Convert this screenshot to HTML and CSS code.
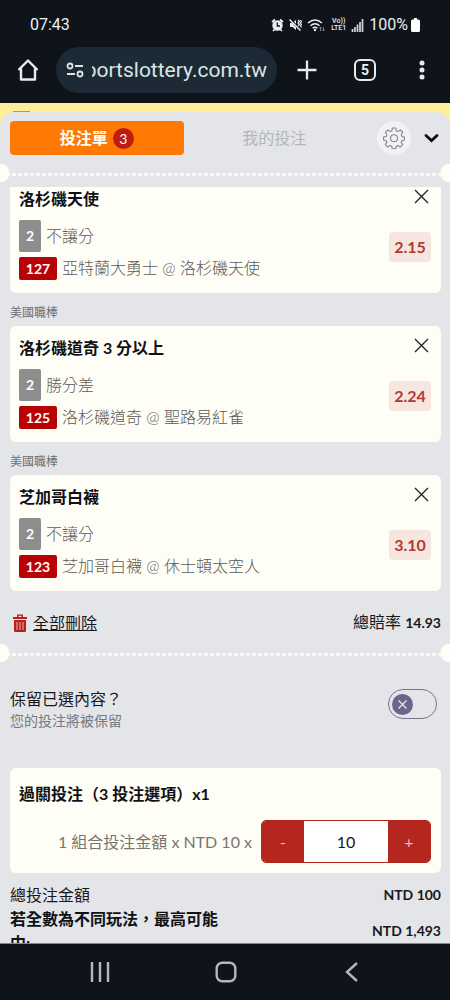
FILE: index.html
```html
<!DOCTYPE html>
<html lang="zh-Hant">
<head>
<meta charset="utf-8">
<meta name="viewport" content="width=device-width, initial-scale=1">
<title>投注單</title>
<link rel="stylesheet" href="styles.css">
</head>
<body>
<div class="phone">
  <header class="chrome">
    <div class="status">
      <time class="clock">07:43</time>
      <div class="status-icons">
        <svg width="13" height="14" viewBox="0 0 13 14"><circle cx="6.5" cy="7.5" r="4.2" fill="#eceff1" stroke="#eceff1" stroke-width="2"/><path d="M1 4 4 1.5M12 4 9 1.5M2 13l2-2M11 13 9 11" stroke="#eceff1" stroke-width="1.7"/><path d="M6.3 4.500v3.500h2.700" fill="none" stroke="#10141b" stroke-width="1.3"/></svg>
        <svg width="13" height="14" viewBox="0 0 13 14"><path d="M1 5h2.500L7 2v10L3.500 9H1z" fill="#eceff1"/><path d="M1 1l11 12" stroke="#10141b" stroke-width="2.400"/><path d="M.5 1.500l11 11" stroke="#eceff1" stroke-width="1.400"/><path d="M9 2l1.500 1.500L9 5l1.500 1.500L9 8M11.500 2l1 1.500-1 1.500 1 1.500-1 1.500 1 1.500" fill="none" stroke="#eceff1" stroke-width="1.200"/></svg>
        <svg width="19" height="14" viewBox="0 0 19 14"><path d="M1 5q7-6 14 0M3.500 7.800q4.500-4 9 0M5.700 10.200q2.300-2 4.600 0" fill="none" stroke="#eceff1" stroke-width="1.500"/><circle cx="8" cy="12" r="1.200" fill="#eceff1"/><path d="M13.500 13V9m-1.200 1.300L13.500 9l1.200 1.300M16.500 9v4m-1.200-1.300L16.500 13l1.200-1.300" fill="none" stroke="#7d8287" stroke-width="1"/></svg>
        <span class="volte"><span>Vo))</span><span>LTE1</span></span>
        <svg width="13" height="13" viewBox="0 0 13 13"><path d="M1.500 13v-3M4 13V8M6.500 13V5.500M9 13V3M11.500 13V0" stroke="#d5d8da" stroke-width="1.700"/></svg>
        <span class="battery-text">100%</span>
        <svg width="9" height="14" viewBox="0 0 9 14"><path d="M3 0h3v1.500h1.500Q9 1.500 9 3v9.500q0 1.500-1.500 1.500h-6Q0 14 0 12.500V3q0-1.500 1.500-1.500H3z" fill="#fff"/></svg>
      </div>
    </div>
    <div class="toolbar">
      <button class="icon-btn" type="button" aria-label="首頁"><svg width="22" height="22" viewBox="0 0 22 22"><path d="M1.500 11 11 1.500 20.500 11M4 9.500v11h14v-11" fill="none" stroke="#e6ecee" stroke-width="2.400" stroke-linejoin="round"/></svg></button>
      <button class="address" type="button">
        <svg width="18" height="16" viewBox="0 0 18 16"><g fill="none" stroke="#dbe4e7" stroke-width="1.800"><circle cx="4" cy="4" r="2.500"/><path d="M9 4h8M1 12h8"/><circle cx="14" cy="12" r="2.500"/></g></svg>
        <span class="url"><span>portslottery.com.tw</span></span>
      </button>
      <div class="actions">
        <button class="icon-btn" type="button" aria-label="新分頁"><svg width="22" height="22" viewBox="0 0 22 22"><path d="M11 1.500v19M1.500 11h19" stroke="#e6ecee" stroke-width="2.300"/></svg></button>
        <button class="tab-count" type="button">5</button>
        <button class="icon-btn" type="button" aria-label="更多"><svg width="22" height="22" viewBox="0 0 22 22"><g fill="#e6ecee"><circle cx="10" cy="4" r="2.500"/><circle cx="10" cy="11" r="2.500"/><circle cx="10" cy="18" r="2.500"/></g></svg></button>
      </div>
    </div>
  </header>

  <main class="page">
    <div class="sheet">
      <div class="tabs">
        <button class="tab tab-active" type="button">投注單<span class="badge">3</span></button>
        <button class="tab" type="button">我的投注</button>
        <button class="gear" type="button" aria-label="設定"><svg width="22" height="22" viewBox="0 0 22 22"><path d="M9.300 1h3.400l.5 2.800 1.800.8 2.400-1.600 2.400 2.400-1.600 2.400.8 1.800 2.500.400v3l-2.600.600-.8 1.800 1.600 2.300-2.400 2.400-2.300-1.600-1.800.8-.5 2.500H9.300l-.5-2.500-1.800-.8-2.300 1.600-2.400-2.400 1.600-2.300-.8-1.800L.5 13v-3l2.600-.400.8-1.800L2.300 5.400 4.700 3l2.400 1.600 1.800-.8z" fill="none" stroke="#85878c" stroke-width="1.100" stroke-linejoin="round"/><circle cx="11" cy="11.300" r="3.500" fill="none" stroke="#85878c" stroke-width="1.100"/></svg></button>
        <button class="icon-btn" type="button" aria-label="收合"><svg width="15" height="10" viewBox="0 0 15 10"><path d="M2 2.500l5.500 5L13 2.500" fill="none" stroke="#0b0c10" stroke-width="2.800" stroke-linecap="round"/></svg></button>
      </div>

      <div class="perforation"></div>

      <section class="bets">
        <article class="card bet bet-scrolled">
          <div class="bet-info">
            <h2 class="title">洛杉磯天使</h2>
            <p class="market"><span class="tag tag-gray">2</span>不讓分</p>
            <p class="match"><span class="tag tag-red">127</span>亞特蘭大勇士 @ 洛杉磯天使</p>
          </div>
          <div class="bet-side">
            <button class="close" type="button" aria-label="刪除"><svg width="15" height="15" viewBox="0 0 15 15"><path d="M1 1l13 13M14 1 1 14" stroke="#25252a" stroke-width="1.400"/></svg></button>
            <span class="odds">2.15</span>
          </div>
        </article>
        <h3 class="league">美國職棒</h3>
        <article class="card bet">
          <div class="bet-info">
            <h2 class="title">洛杉磯道奇 3 分以上</h2>
            <p class="market"><span class="tag tag-gray">2</span>勝分差</p>
            <p class="match"><span class="tag tag-red">125</span>洛杉磯道奇 @ 聖路易紅雀</p>
          </div>
          <div class="bet-side">
            <button class="close" type="button" aria-label="刪除"><svg width="15" height="15" viewBox="0 0 15 15"><path d="M1 1l13 13M14 1 1 14" stroke="#25252a" stroke-width="1.400"/></svg></button>
            <span class="odds">2.24</span>
          </div>
        </article>
        <h3 class="league">美國職棒</h3>
        <article class="card bet">
          <div class="bet-info">
            <h2 class="title">芝加哥白襪</h2>
            <p class="market"><span class="tag tag-gray">2</span>不讓分</p>
            <p class="match"><span class="tag tag-red">123</span>芝加哥白襪 @ 休士頓太空人</p>
          </div>
          <div class="bet-side">
            <button class="close" type="button" aria-label="刪除"><svg width="15" height="15" viewBox="0 0 15 15"><path d="M1 1l13 13M14 1 1 14" stroke="#25252a" stroke-width="1.400"/></svg></button>
            <span class="odds">3.10</span>
          </div>
        </article>
      </section>

      <div class="summary">
        <a class="clear" href="#"><svg width="14" height="18" viewBox="0 0 14 18"><path d="M0 3h14v2H0zM4 3V.5h6V3H8.500V1.800h-3V3z" fill="#b8201c"/><path d="M1 6h12v10.500q0 1.500-1.500 1.500h-9Q1 18 1 16.500z" fill="#b8201c"/><path d="M4 8v8M7 8v8M10 8v8" stroke="#ecb5b0" stroke-width="1"/></svg><span class="clear-text">全部刪除</span></a>
        <span>總賠率 <b>14.93</b></span>
      </div>

      <div class="perforation"></div>

      <div class="keep">
        <label for="keep">
          <span class="keep-title">保留已選內容？</span>
          <span class="keep-note">您的投注將被保留</span>
        </label>
        <span class="switch">
          <input class="switch-box" id="keep" type="checkbox">
          <svg class="switch-knob" width="21" height="21" viewBox="0 0 21 21"><circle cx="10.500" cy="10.500" r="10.500" fill="#69668a"/><path d="M6.500 6.500l8 8M14.500 6.500l-8 8" stroke="#e6e6ee" stroke-width="1.300"/></svg>
        </span>
      </div>

      <section class="card stake">
        <h2 class="title">過關投注（3 投注選項）x1</h2>
        <div class="stake-row">
          <label for="amount">1 組合投注金額 x NTD 10 x</label>
          <div class="stepper">
            <button class="step" type="button">-</button>
            <input class="amount" id="amount" type="text" value="10">
            <button class="step" type="button">+</button>
          </div>
        </div>
      </section>

      <dl class="totals">
        <div class="total"><dt>總投注金額</dt><dd>NTD 100</dd></div>
        <div class="total"><dt class="strong">若全數為不同玩法，最高可能中:</dt><dd>NTD 1,493</dd></div>
      </dl>
    </div>
  </main>

  <nav class="nav">
    <button class="icon-btn" type="button" aria-label="最近"><svg width="22" height="22" viewBox="0 0 22 22"><path d="M3 1v20M11 1v20M19 1v20" stroke="#b4b7bb" stroke-width="2.400"/></svg></button>
    <button class="icon-btn" type="button" aria-label="主畫面"><svg width="22" height="22" viewBox="0 0 22 22"><rect x="1.700" y="1.700" width="18.600" height="18.600" rx="5.500" fill="none" stroke="#b4b7bb" stroke-width="2.400"/></svg></button>
    <button class="icon-btn" type="button" aria-label="返回"><svg width="22" height="22" viewBox="0 0 22 22"><path d="M16 2 6 11l10 9" fill="none" stroke="#b4b7bb" stroke-width="2.400"/></svg></button>
  </nav>
</div>
</body>
</html>
```
FILE: styles.css
```css
* { box-sizing: border-box; }
body, h2, h3, p, dl, dd { margin: 0; }
svg { display: block; flex: none; }
button, input { font: inherit; color: inherit; }
button { padding: 0; border: 0; background: none; }

.phone {
  display: flex;
  flex-direction: column;
  height: 100vh;
  overflow: hidden;
  font: 16px/24px Lato, "Noto Sans CJK TC", sans-serif;
  color: #17181c;
}

.chrome {
  flex: none;
  padding-bottom: 10px;
  background: #0f141b;
  color: #eceff1;
  font-family: Roboto, sans-serif;
}
.status {
  display: flex;
  justify-content: space-between;
  align-items: center;
  padding: 13px 30px 10px;
}
.status-icons { display: flex; align-items: center; gap: 5px; }
.battery-text { margin-right: -2px; }
.volte {
  display: flex;
  flex-direction: column;
  align-items: center;
  font-size: 7px;
  font-weight: 500;
  line-height: 7px;
}
.toolbar { display: flex; align-items: center; padding: 0 16px 0 17px; }
.address {
  display: flex;
  flex: 1;
  align-items: center;
  gap: 8px;
  min-width: 0;
  height: 46px;
  margin: 0 19px 0 17px;
  padding: 0 10px;
  border-radius: 23px;
  background: #1b2a34;
  color: #dbe4e7;
}
.url {
  display: flex;
  flex: 1;
  justify-content: flex-end;
  overflow: hidden;
  font-size: 21px;
  line-height: 28px;
}
.actions { display: flex; gap: 36px; }
.tab-count {
  width: 22px;
  height: 22px;
  border: 2px solid #e6ecee;
  border-radius: 6px;
  font-size: 14px;
  font-weight: 700;
  line-height: 18px;
}

.page {
  flex: 1;
  min-height: 0;
  overflow: hidden;
  padding-top: 8px;
  background: #fff096;
  border-bottom: 1px solid #85878c;
}
.page::before {
  content: "";
  display: block;
  width: 17px;
  height: 1px;
  margin-left: 13px;
  background: #a09c80;
}
.sheet {
  border-radius: 14px 14px 0 0;
  background: #e4e5e9;
}
.tabs {
  display: flex;
  align-items: center;
  padding: 9px 11px 9px 10px;
}
.tab {
  display: flex;
  flex: 1;
  justify-content: center;
  align-items: center;
  gap: 5px;
  height: 34px;
  border-radius: 4px;
  color: #b4b5b9;
}
.tab-active {
  margin-right: 4px;
  background: #ff7a05;
  color: #fffdf3;
  font-weight: 700;
}
.badge {
  width: 21px;
  height: 21px;
  border-radius: 50%;
  background: #c01a12;
  font-size: 14px;
  font-weight: 400;
  line-height: 21px;
}
.gear {
  display: grid;
  place-items: center;
  width: 34px;
  height: 34px;
  margin: 0 13px 0 16px;
  border-radius: 50%;
  background: #f1f2f6;
}

.perforation {
  height: 18px;
  background:
    radial-gradient(circle at 0 50%, #fffef6 9px, transparent 10px),
    radial-gradient(circle at 100% 50%, #fffef6 9px, transparent 10px),
    repeating-linear-gradient(90deg, #fafaf6 0 4px, transparent 4px 6px) 0 60% / 100% 3px no-repeat;
}

.bets { padding: 5px 9px 0 10px; }
.card { border-radius: 6px; background: #fffef6; }
.bet {
  display: flex;
  justify-content: space-between;
  padding: 10px 10px 13px 9px;
}
.bet-scrolled {
  padding-top: 0;
  border-radius: 0 0 6px 6px;
}
.title { font-size: 16px; font-weight: 700; line-height: 24px; color: #101114; }
.market, .match {
  display: flex;
  align-items: center;
  gap: 5px;
  color: #5c5a55;
  font-weight: 300;
}
.market { margin-top: 9px; }
.match { margin-top: 4px; }
.tag {
  border-radius: 2px;
  color: #fff;
  font-weight: 700;
  text-align: center;
}
.tag-gray { width: 22px; font-size: 14px; line-height: 32px; background: #8d8d8d; }
.tag-red { width: 38px; font-size: 14px; line-height: 23px; background: #b90206; }
.bet-side {
  display: flex;
  flex-direction: column;
  align-items: flex-end;
  gap: 28px;
}
.close { margin: 2px 2px 0 0; }
.odds {
  width: 42px;
  border-radius: 4px;
  background: #f7e6e0;
  color: #b03a35;
  font-size: 16px;
  font-weight: 700;
  line-height: 30px;
  text-align: center;
}
.league {
  padding: 10px 0 3px;
  color: #6d6e73;
  font-size: 12px;
  font-weight: 400;
  line-height: 20px;
}

.summary {
  display: flex;
  justify-content: space-between;
  padding: 19px 9px 9px 13px;
}
.clear { display: flex; align-items: center; gap: 6px; color: inherit; text-decoration: none; }
.clear-text { text-decoration: underline; }
.summary b { font-size: 14px; }

.keep {
  display: flex;
  justify-content: space-between;
  align-items: flex-start;
  padding: 25px 13px 37px 10px;
}
.keep-title, .keep-note { display: block; }
.keep-note { font-size: 14px; line-height: 20px; color: #77787d; }
.switch { position: relative; display: flex; margin-top: 2px; }
.switch-box {
  appearance: none;
  width: 49px;
  height: 30px;
  margin: 0;
  border: 1px solid #77758c;
  border-radius: 15px;
}
.switch-knob { position: absolute; left: 4px; top: 5px; pointer-events: none; }

.stake { margin: 0 9px 0 10px; padding: 14px 10px 10px 9px; }
.stake-row {
  display: flex;
  justify-content: flex-end;
  align-items: center;
  gap: 9px;
  margin-top: 14px;
  color: #77756f;
}
.stepper {
  display: flex;
  width: 170px;
  height: 43px;
  overflow: hidden;
  border: 1px solid #b5261e;
  border-radius: 5px;
}
.step { width: 42px; background: #b5261e; color: #f0b8ae; }
.amount {
  flex: 1;
  min-width: 0;
  padding: 0;
  border: 0;
  background: #fff;
  color: #17181c;
  font-size: 16px;
  text-align: center;
}

.totals { padding: 10px 9px 0 10px; }
.total { display: flex; justify-content: space-between; align-items: center; }
.total dt { width: 212px; }
.total dd { font-size: 14px; font-weight: 700; }
.strong { font-weight: 700; color: #101114; }

.nav {
  display: flex;
  flex: none;
  justify-content: space-between;
  align-items: center;
  height: 56px;
  padding: 0 87px 0 89px;
  background: #0f141b;
}
```
